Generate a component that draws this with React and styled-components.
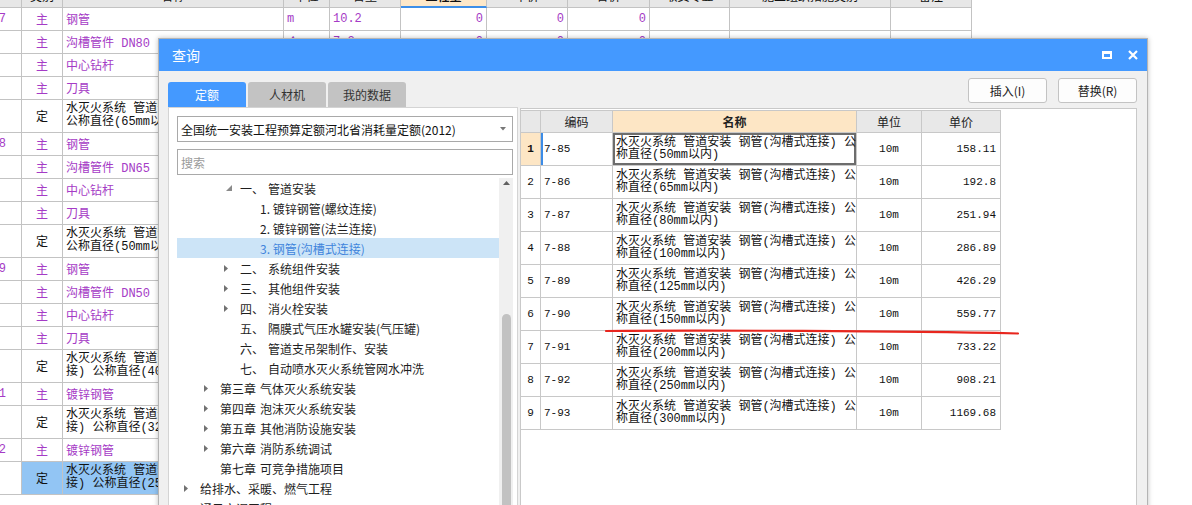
import React from 'react'
import styled, { createGlobalStyle } from 'styled-components'

const GlobalStyle = createGlobalStyle`
  html, body {
    margin: 0;
    padding: 0;
    background: #fff;
  }
  body {
    font-family: "Noto Sans CJK SC", sans-serif;
    font-size: 12px;
    color: #222;
  }
`

const Screen = styled.div`
  position: relative;
  width: 1192px;
  height: 505px;
  overflow: hidden;
  background: #fff;
`

/* ---------- background sheet ---------- */

const SHEET_COLS = '22px 41px 221px 46px 71px 86px 81px 82px 80px 161px 81px'

const Sheet = styled.div`
  margin-top: -16px;
  width: 972px;
`

const SheetRow = styled.div`
  display: grid;
  grid-template-columns: ${SHEET_COLS};
  height: ${p => p.$h}px;
`

const SheetCell = styled.div`
  box-sizing: border-box;
  border-right: 1px solid #c3c3c3;
  border-bottom: ${p => p.$accent ? '2px solid #3d8fe8' : '1px solid #c3c3c3'};
  display: flex;
  align-items: center;
  justify-content: ${p => p.$align === 'right' ? 'flex-end' : p.$align === 'center' ? 'center' : 'flex-start'};
  padding: ${p => p.$pad || '0 3px'};
  overflow: hidden;
  white-space: nowrap;
  color: ${p => p.$color || '#111'};
  background: ${p => p.$bg || '#fff'};
  font-family: ${p => p.$head ? '"Noto Sans CJK SC", sans-serif' : '"Liberation Mono", "Noto Sans CJK SC", monospace'};
  font-size: 12px;
  font-weight: ${p => p.$bold ? 700 : 400};
`

const Lines = styled.div`
  display: flex;
  flex-direction: column;
  line-height: 13px;
`

const PURPLE = '#a53bc6'

const sheetHead = ['', '类别', '名称', '单位', '含量', '工程量', '单价', '合价', '取费专业', '施工组织措施类别', '备注']

const pipeRows = (no, pipe, dn, size, kind) => [
  { no, kind: '主', name: pipe },
  ...(dn ? [
    { kind: '主', name: '沟槽管件 ' + dn },
    { kind: '主', name: '中心钻杆' },
    { kind: '主', name: '刀具' },
  ] : []),
  { kind: '定', lines: kind === 'groove'
    ? ['水灭火系统 管道安装 钢管(沟槽式连接)', '公称直径(' + size + 'mm以内)']
    : ['水灭火系统 管道安装 镀锌钢管(螺纹连', '接) 公称直径(' + size + 'mm以内)'] },
]

const sheetRows = [
  { no: '97', kind: '主', name: '钢管', unit: 'm', qty: '10.2', zeros: true },
  { kind: '主', name: '沟槽管件 DN80', unit: '个', qty: '7.2', zeros: true },
  { kind: '主', name: '中心钻杆' },
  { kind: '主', name: '刀具' },
  { kind: '定', lines: ['水灭火系统 管道安装 钢管(沟槽式连接)', '公称直径(65mm以内)'] },
  ...pipeRows('98', '钢管', 'DN65', 50, 'groove'),
  { no: '99', kind: '主', name: '钢管' },
  { kind: '主', name: '沟槽管件 DN50' },
  { kind: '主', name: '中心钻杆' },
  { kind: '主', name: '刀具' },
  { kind: '定', lines: ['水灭火系统 管道安装 镀锌钢管(螺纹连', '接) 公称直径(40mm以内)'] },
  ...pipeRows('101', '镀锌钢管', null, 32, 'thread'),
  { no: '102', kind: '主', name: '镀锌钢管' },
  { kind: '定', lines: ['水灭火系统 管道安装 镀锌钢管(螺纹连', '接) 公称直径(25mm以内)'], selected: true },
]

function BackgroundSheet() {
  return (
    <Sheet>
      <SheetRow $h={24}>
        {sheetHead.map((h, i) => (
          <SheetCell key={i} $head $align="center" $bg={i === 5 ? '#fde8c9' : '#e7e7e7'} $accent={i === 5} $bold={i === 5}>{h}</SheetCell>
        ))}
      </SheetRow>
      {sheetRows.map((r, i) => {
        const color = r.kind === '主' ? PURPLE : '#111'
        const bg = r.selected ? '#92c5f4' : '#fff'
        return (
          <SheetRow key={i} $h={r.lines ? 33 : 23}>
            <SheetCell $align="right" $pad="0 15px 0 0" $color={PURPLE}>{r.no}</SheetCell>
            <SheetCell $align="center" $color={color} $bg={bg}>{r.kind}</SheetCell>
            <SheetCell $color={color} $bg={bg}>
              {r.lines ? <Lines>{r.lines.map(l => <span key={l}>{l}</span>)}</Lines> : r.name}
            </SheetCell>
            <SheetCell $color={PURPLE} $bg={bg}>{r.unit}</SheetCell>
            <SheetCell $color={PURPLE} $bg={bg}>{r.qty}</SheetCell>
            {[0, 1, 2].map(k => (
              <SheetCell key={k} $align="right" $color={PURPLE} $bg={bg}>{r.zeros ? '0' : ''}</SheetCell>
            ))}
            <SheetCell $bg={bg} />
            <SheetCell $bg={bg} />
            <SheetCell $bg={bg} />
          </SheetRow>
        )
      })}
    </Sheet>
  )
}

/* ---------- dialog ---------- */

const Dialog = styled.div`
  position: absolute;
  left: 158px;
  top: 38px;
  width: 990px;
  height: 480px;
  box-sizing: border-box;
  border: 1px solid #b4b4b4;
  background: #f0f0f0;
  box-shadow: 0 0 5px rgba(0, 0, 0, 0.25);
  display: flex;
  flex-direction: column;
`

const TitleBar = styled.div`
  height: 32px;
  flex: none;
  background: #4499ff;
  display: flex;
  align-items: center;
  justify-content: space-between;
  padding: 0 9px 0 13px;
`

const Title = styled.span`
  color: #fff;
  font-size: 14px;
`

const TitleTools = styled.div`
  display: flex;
  align-items: center;
  gap: 16px;
`

const MaxIcon = styled.span`
  display: block;
  width: 10px;
  height: 8px;
  box-sizing: border-box;
  border: 2px solid #fff;
  border-top-width: 3px;
`

const Body = styled.div`
  flex: 1;
  min-height: 0;
  display: flex;
  gap: 2px;
  padding: 7px 10px 0 9px;
`

const LeftCol = styled.div`
  width: 350px;
  display: flex;
  flex-direction: column;
`

const Tabs = styled.div`
  display: flex;
  gap: 2px;
  height: 25px;
  margin-top: 4px;
`

const Tab = styled.div`
  width: 78px;
  border-radius: 3px 3px 0 0;
  display: flex;
  align-items: center;
  justify-content: center;
  font-size: 12px;
  color: ${p => p.$active ? '#fff' : '#333'};
  background: ${p => p.$active ? '#4499ff' : '#c3c3c3'};
`

const LeftPanel = styled.div`
  flex: 1;
  min-height: 0;
  background: #fff;
  border: 1px solid #d4d4d4;
  padding: 8px 4px 0 8px;
  display: flex;
  flex-direction: column;
`

const SelectBox = styled.div`
  height: 26px;
  box-sizing: border-box;
  border: 1px solid #a9a9a9;
  display: flex;
  align-items: center;
  justify-content: space-between;
  padding: 0 6px 0 3px;
  font-size: 12px;
  color: #111;
`

const SearchInput = styled.input`
  height: 26px;
  box-sizing: border-box;
  margin: 7px 0 0;
  border: 1px solid #a9a9a9;
  padding: 0 3px;
  font-family: "Noto Sans CJK SC", sans-serif;
  font-size: 12px;
  outline: none;
  &::placeholder {
    color: #9a9a9a;
  }
`

const TreeArea = styled.div`
  flex: 1;
  min-height: 0;
  margin-top: 3px;
  display: flex;
`

const TreeList = styled.div`
  flex: 1;
  overflow: hidden;
`

const TreeRow = styled.div`
  height: 20px;
  display: flex;
  align-items: center;
  padding-left: ${p => 7 + p.$level * 20}px;
  font-size: 12px;
  white-space: nowrap;
  color: ${p => p.$selected ? '#3f84dc' : '#1e1e1e'};
  background: ${p => p.$selected ? '#cce4f7' : 'transparent'};
`

const ArrowBox = styled.span`
  width: 16px;
  flex: none;
  display: flex;
  align-items: center;
`

const Num = styled.span`
  margin-right: 4px;
`

const ScrollTrack = styled.div`
  width: 14px;
  flex: none;
  background: #f0f0f0;
  display: flex;
  flex-direction: column;
  align-items: center;
  padding-top: 3px;
`

const ScrollThumb = styled.div`
  margin-top: 129px;
  width: 9px;
  flex: 1;
  border-radius: 5px;
  background: #c2c2c2;
`

const RightCol = styled.div`
  width: 617px;
  display: flex;
  flex-direction: column;
`

const Toolbar = styled.div`
  height: 25px;
  display: flex;
  justify-content: flex-end;
  gap: 11px;
  margin-bottom: 5px;
`

const ToolButton = styled.div`
  width: 79px;
  box-sizing: border-box;
  border: 1px solid #c3c3c3;
  border-radius: 3px;
  background: #fdfdfd;
  display: flex;
  align-items: center;
  justify-content: center;
  font-size: 12px;
  color: #222;
`

const RightPanel = styled.div`
  flex: 1;
  min-height: 0;
  background: #fff;
  border: 1px solid #c9c9c9;
  padding-top: 1px;
`

const TABLE_COLS = '20px 72px 244px 65px 79px'

const QRow = styled.div`
  display: grid;
  grid-template-columns: ${TABLE_COLS};
  width: 480px;
  height: ${p => p.$h}px;
`

const QHead = styled.div`
  box-sizing: border-box;
  border-top: 1px solid #c8c8c8;
  border-right: 1px solid #c8c8c8;
  border-bottom: 1px solid #c8c8c8;
  background: ${p => p.$hot ? '#fde6c5' : '#e8e8e8'};
  font-weight: ${p => p.$hot ? 700 : 400};
  display: flex;
  align-items: center;
  justify-content: center;
  font-size: 12px;
  color: #222;
`

const QCell = styled.div`
  box-sizing: border-box;
  border-right: 1px solid #c8c8c8;
  border-bottom: 1px solid #c8c8c8;
  display: flex;
  align-items: center;
  justify-content: ${p => p.$align === 'right' ? 'flex-end' : p.$align === 'center' ? 'center' : 'flex-start'};
  padding: ${p => p.$align === 'right' ? '0 4px 0 0' : p.$align === 'center' ? '0' : '0 0 0 3px'};
  font-family: "Liberation Mono", "Noto Sans CJK SC", monospace;
  font-size: ${p => p.$small ? 11 : 12}px;
  font-weight: ${p => p.$bold ? 700 : 400};
  color: #111;
  white-space: nowrap;
  background: ${p => p.$bg || '#fff'};
  box-shadow: ${p => p.$focus ? 'inset 0 0 0 2px #6d6d6d' : p.$mark ? 'inset 2px 0 0 #3c8ce7' : 'none'};
`

const NameLines = styled.div`
  display: flex;
  flex-direction: column;
  line-height: 12px;
  padding-left: 0;
`

const Annotation = styled.svg`
  position: absolute;
  left: 0;
  top: 0;
  pointer-events: none;
`

const treeItems = [
  { level: 2, arrow: 'open', num: '一、', text: '管道安装' },
  { level: 3, text: '1. 镀锌钢管(螺纹连接)' },
  { level: 3, text: '2. 镀锌钢管(法兰连接)' },
  { level: 3, text: '3. 钢管(沟槽式连接)', selected: true },
  { level: 2, arrow: 'closed', num: '二、', text: '系统组件安装' },
  { level: 2, arrow: 'closed', num: '三、', text: '其他组件安装' },
  { level: 2, arrow: 'closed', num: '四、', text: '消火栓安装' },
  { level: 2, num: '五、', text: '隔膜式气压水罐安装(气压罐)' },
  { level: 2, num: '六、', text: '管道支吊架制作、安装' },
  { level: 2, num: '七、', text: '自动喷水灭火系统管网水冲洗' },
  { level: 1, arrow: 'closed', num: '第三章', text: '气体灭火系统安装' },
  { level: 1, arrow: 'closed', num: '第四章', text: '泡沫灭火系统安装' },
  { level: 1, arrow: 'closed', num: '第五章', text: '其他消防设施安装' },
  { level: 1, arrow: 'closed', num: '第六章', text: '消防系统调试' },
  { level: 1, num: '第七章', text: '可竞争措施项目' },
  { level: 0, arrow: 'closed', text: '给排水、采暖、燃气工程' },
  { level: 0, arrow: 'closed', text: '通风空调工程' },
]

const quotaRows = [
  ['7-85', 50, '158.11'],
  ['7-86', 65, '192.8'],
  ['7-87', 80, '251.94'],
  ['7-88', 100, '286.89'],
  ['7-89', 125, '426.29'],
  ['7-90', 150, '559.77'],
  ['7-91', 200, '733.22'],
  ['7-92', 250, '908.21'],
  ['7-93', 300, '1169.68'],
]

function TreeArrow({ type }) {
  if (type === 'open') {
    return (
      <svg width="6" height="6" viewBox="0 0 6 6" style={{ marginLeft: 2 }}>
        <polygon points="6,0 6,6 0,6" fill="#8a8a8a" />
      </svg>
    )
  }
  if (type === 'closed') {
    return (
      <svg width="4" height="7" viewBox="0 0 4 7">
        <polygon points="0,0 4,3.5 0,7" fill="#727272" />
      </svg>
    )
  }
  return null
}

function QueryDialog() {
  return (
    <Dialog>
      <TitleBar>
        <Title>查询</Title>
        <TitleTools>
          <MaxIcon />
          <svg width="10" height="10" viewBox="0 0 10 10">
            <path d="M1 1 L9 9 M9 1 L1 9" stroke="#fff" strokeWidth="2.2" />
          </svg>
        </TitleTools>
      </TitleBar>
      <Body>
        <LeftCol>
          <Tabs>
            <Tab $active>定额</Tab>
            <Tab>人材机</Tab>
            <Tab>我的数据</Tab>
          </Tabs>
          <LeftPanel>
            <SelectBox>
              <span>全国统一安装工程预算定额河北省消耗量定额(2012)</span>
              <svg width="6" height="4" viewBox="0 0 6 4">
                <polygon points="0,0 6,0 3,3.5" fill="#777" />
              </svg>
            </SelectBox>
            <SearchInput placeholder="搜索" />
            <TreeArea>
              <TreeList>
                {treeItems.map((t, i) => (
                  <TreeRow key={i} $level={t.level} $selected={t.selected}>
                    <ArrowBox><TreeArrow type={t.arrow} /></ArrowBox>
                    {t.num && <Num>{t.num}</Num>}
                    {t.text}
                  </TreeRow>
                ))}
              </TreeList>
              <ScrollTrack>
                <svg width="7" height="4" viewBox="0 0 7 4">
                  <polygon points="0,4 7,4 3.5,0" fill="#606060" />
                </svg>
                <ScrollThumb />
              </ScrollTrack>
            </TreeArea>
          </LeftPanel>
        </LeftCol>
        <RightCol>
          <Toolbar>
            <ToolButton>插入(I)</ToolButton>
            <ToolButton>替换(R)</ToolButton>
          </Toolbar>
          <RightPanel>
            <QRow $h={23}>
              <QHead />
              <QHead>编码</QHead>
              <QHead $hot>名称</QHead>
              <QHead>单位</QHead>
              <QHead>单价</QHead>
            </QRow>
            {quotaRows.map(([code, size, price], i) => (
              <QRow key={code} $h={33}>
                <QCell $align="center" $small $bold={i === 0} $bg={i === 0 ? '#fde6c5' : '#fff'}>{i + 1}</QCell>
                <QCell $small $mark={i === 0}>{code}</QCell>
                <QCell $focus={i === 0}>
                  <NameLines>
                    <span>水灭火系统 管道安装 钢管(沟槽式连接) 公</span>
                    <span>称直径({size}mm以内)</span>
                  </NameLines>
                </QCell>
                <QCell $align="center" $small>10m</QCell>
                <QCell $align="right" $small>{price}</QCell>
              </QRow>
            ))}
          </RightPanel>
        </RightCol>
      </Body>
    </Dialog>
  )
}

export default function App() {
  return (
    <Screen>
      <GlobalStyle />
      <BackgroundSheet />
      <QueryDialog />
      <Annotation width="1192" height="505" viewBox="0 0 1192 505">
        <path d="M606 331 C 700 330, 900 331, 1018 333.5" stroke="#e8261e" strokeWidth="2.2" fill="none" strokeLinecap="round" />
      </Annotation>
    </Screen>
  )
}
